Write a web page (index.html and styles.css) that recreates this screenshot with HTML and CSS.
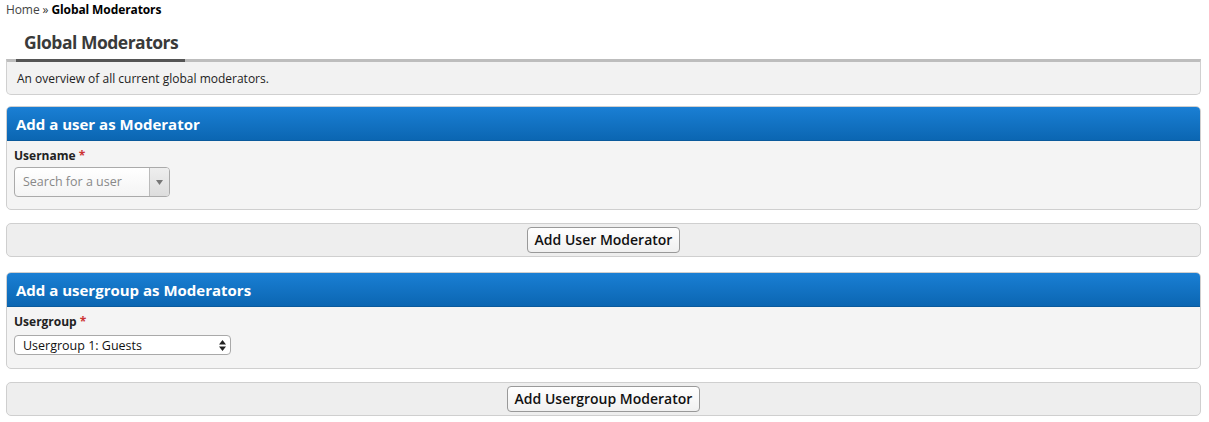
FILE: index.html
```html
<!DOCTYPE html>
<html>
<head>
<meta charset="utf-8">
<link rel="stylesheet" href="styles.css">
</head>
<body>
<div class="breadcrumb"><a href="#">Home</a> » <strong>Global Moderators</strong></div>
<div class="page-tabs"><div class="tab">Global Moderators</div></div>
<div class="desc">An overview of all current global moderators.</div>

<div class="box">
  <div class="box-head">Add a user as Moderator</div>
  <div class="box-body">
    <label class="lbl">Username <span class="req">*</span></label>
    <div class="chosen">
      <span class="ph">Search for a user</span>
      <span class="arrow"><svg width="7" height="5" viewBox="0 0 7 5"><path d="M0 0h7L3.5 5z" fill="#777"/></svg></span>
    </div>
  </div>
</div>
<div class="btnrow"><button class="btn">Add User Moderator</button></div>

<div class="box">
  <div class="box-head">Add a usergroup as Moderators</div>
  <div class="box-body tall">
    <label class="lbl">Usergroup <span class="req">*</span></label>
    <div class="select">
      <span>Usergroup 1: Guests</span>
      <svg width="7" height="11" viewBox="0 0 7 11"><path d="M0 4.5h7L3.5 0z M0 6.5h7L3.5 11z" fill="#222"/></svg>
    </div>
  </div>
</div>
<div class="btnrow"><button class="btn">Add Usergroup Moderator</button></div>
</body>
</html>
```
FILE: styles.css
```css
body {
  margin: 0;
  padding: 0 8px 0 6px;
  font-family: "Open Sans", sans-serif;
  font-size: 12px;
  color: #222;
  background: #fff;
}
.breadcrumb {
  font-size: 12px;
  line-height: 18px;
  padding-top: 1px;
  color: #333;
  letter-spacing: -0.1px;
}
.breadcrumb a { color: #444; text-decoration: none; }
.breadcrumb strong { color: #000; }
.page-tabs {
  display: flex;
  padding-left: 10px;
  margin-top: 10px;
}
.tab {
  font-size: 17.5px;
  font-weight: bold;
  color: #3a3a3a;
  padding: 0 7px 4px 8px;
  line-height: 26px;
  letter-spacing: -0.5px;
  border-bottom: 3px solid #555;
  margin-bottom: -3px;
  position: relative;
}
.desc {
  background: #f2f2f2;
  border: 1px solid #d0d0d0;
  border-top: 3px solid #bdbdbd;
  border-radius: 0 0 5px 5px;
  padding: 8px 10px 7px 10px;
  font-size: 12px;
  line-height: 17px;
  color: #222;
}
.box {
  margin-top: 11px;
  border: 1px solid #cfcfcf;
  border-radius: 5px;
  background: #f4f4f4;
  overflow: hidden;
}
.btnrow + .box { margin-top: 15px; }
.box-head {
  background: linear-gradient(#1a7fd4, #0b66b2);
  color: #fff;
  font-weight: bold;
  font-size: 15px;
  line-height: 20px;
  height: 34px;
  box-sizing: border-box;
  padding: 7px 9px;
  border-bottom: 1px solid #0a5a9c;
}
.box-body {
  padding: 6px 7px 12px;
}
.box-body.tall { padding-bottom: 13px; }
.lbl {
  display: block;
  font-weight: bold;
  font-size: 12px;
  line-height: 18px;
  color: #222;
}
.req { color: #c33; }
.chosen {
  margin-top: 2px;
  width: 154px;
  height: 28px;
  border: 1px solid #aaa;
  border-radius: 4px;
  background: linear-gradient(#fff, #f4f4f4);
  display: flex;
  align-items: stretch;
  overflow: hidden;
}
.chosen .ph {
  flex: 1;
  color: #888;
  font-size: 12.5px;
  line-height: 28px;
  padding-left: 8px;
}
.chosen .arrow {
  width: 19px;
  border-left: 1px solid #bbb;
  background: linear-gradient(#eee, #ddd);
  display: flex;
  align-items: center;
  justify-content: center;
}
.select {
  margin-top: 4px;
  height: 18px;
  border: 1px solid #a9a9a9;
  border-radius: 4px;
  background: #fff;
  display: flex;
  align-items: center;
  justify-content: space-between;
  padding: 0 4px 0 8px;
  box-sizing: content-box;
  width: 203px;
  font-size: 12.5px;
  color: #111;
}
.btnrow {
  margin-top: 13px;
  background: #eee;
  border: 1px solid #cfcfcf;
  border-radius: 5px;
  height: 32px;
  display: flex;
  align-items: center;
  justify-content: center;
}
.btn {
  font-family: "Open Sans", sans-serif;
  font-size: 14px;
  font-weight: 600;
  color: #111;
  background: linear-gradient(#fff, #f0f0f0);
  border: 1px solid #999;
  border-radius: 4px;
  height: 26px;
  padding: 0 7px;
  line-height: 24px;
}
```
